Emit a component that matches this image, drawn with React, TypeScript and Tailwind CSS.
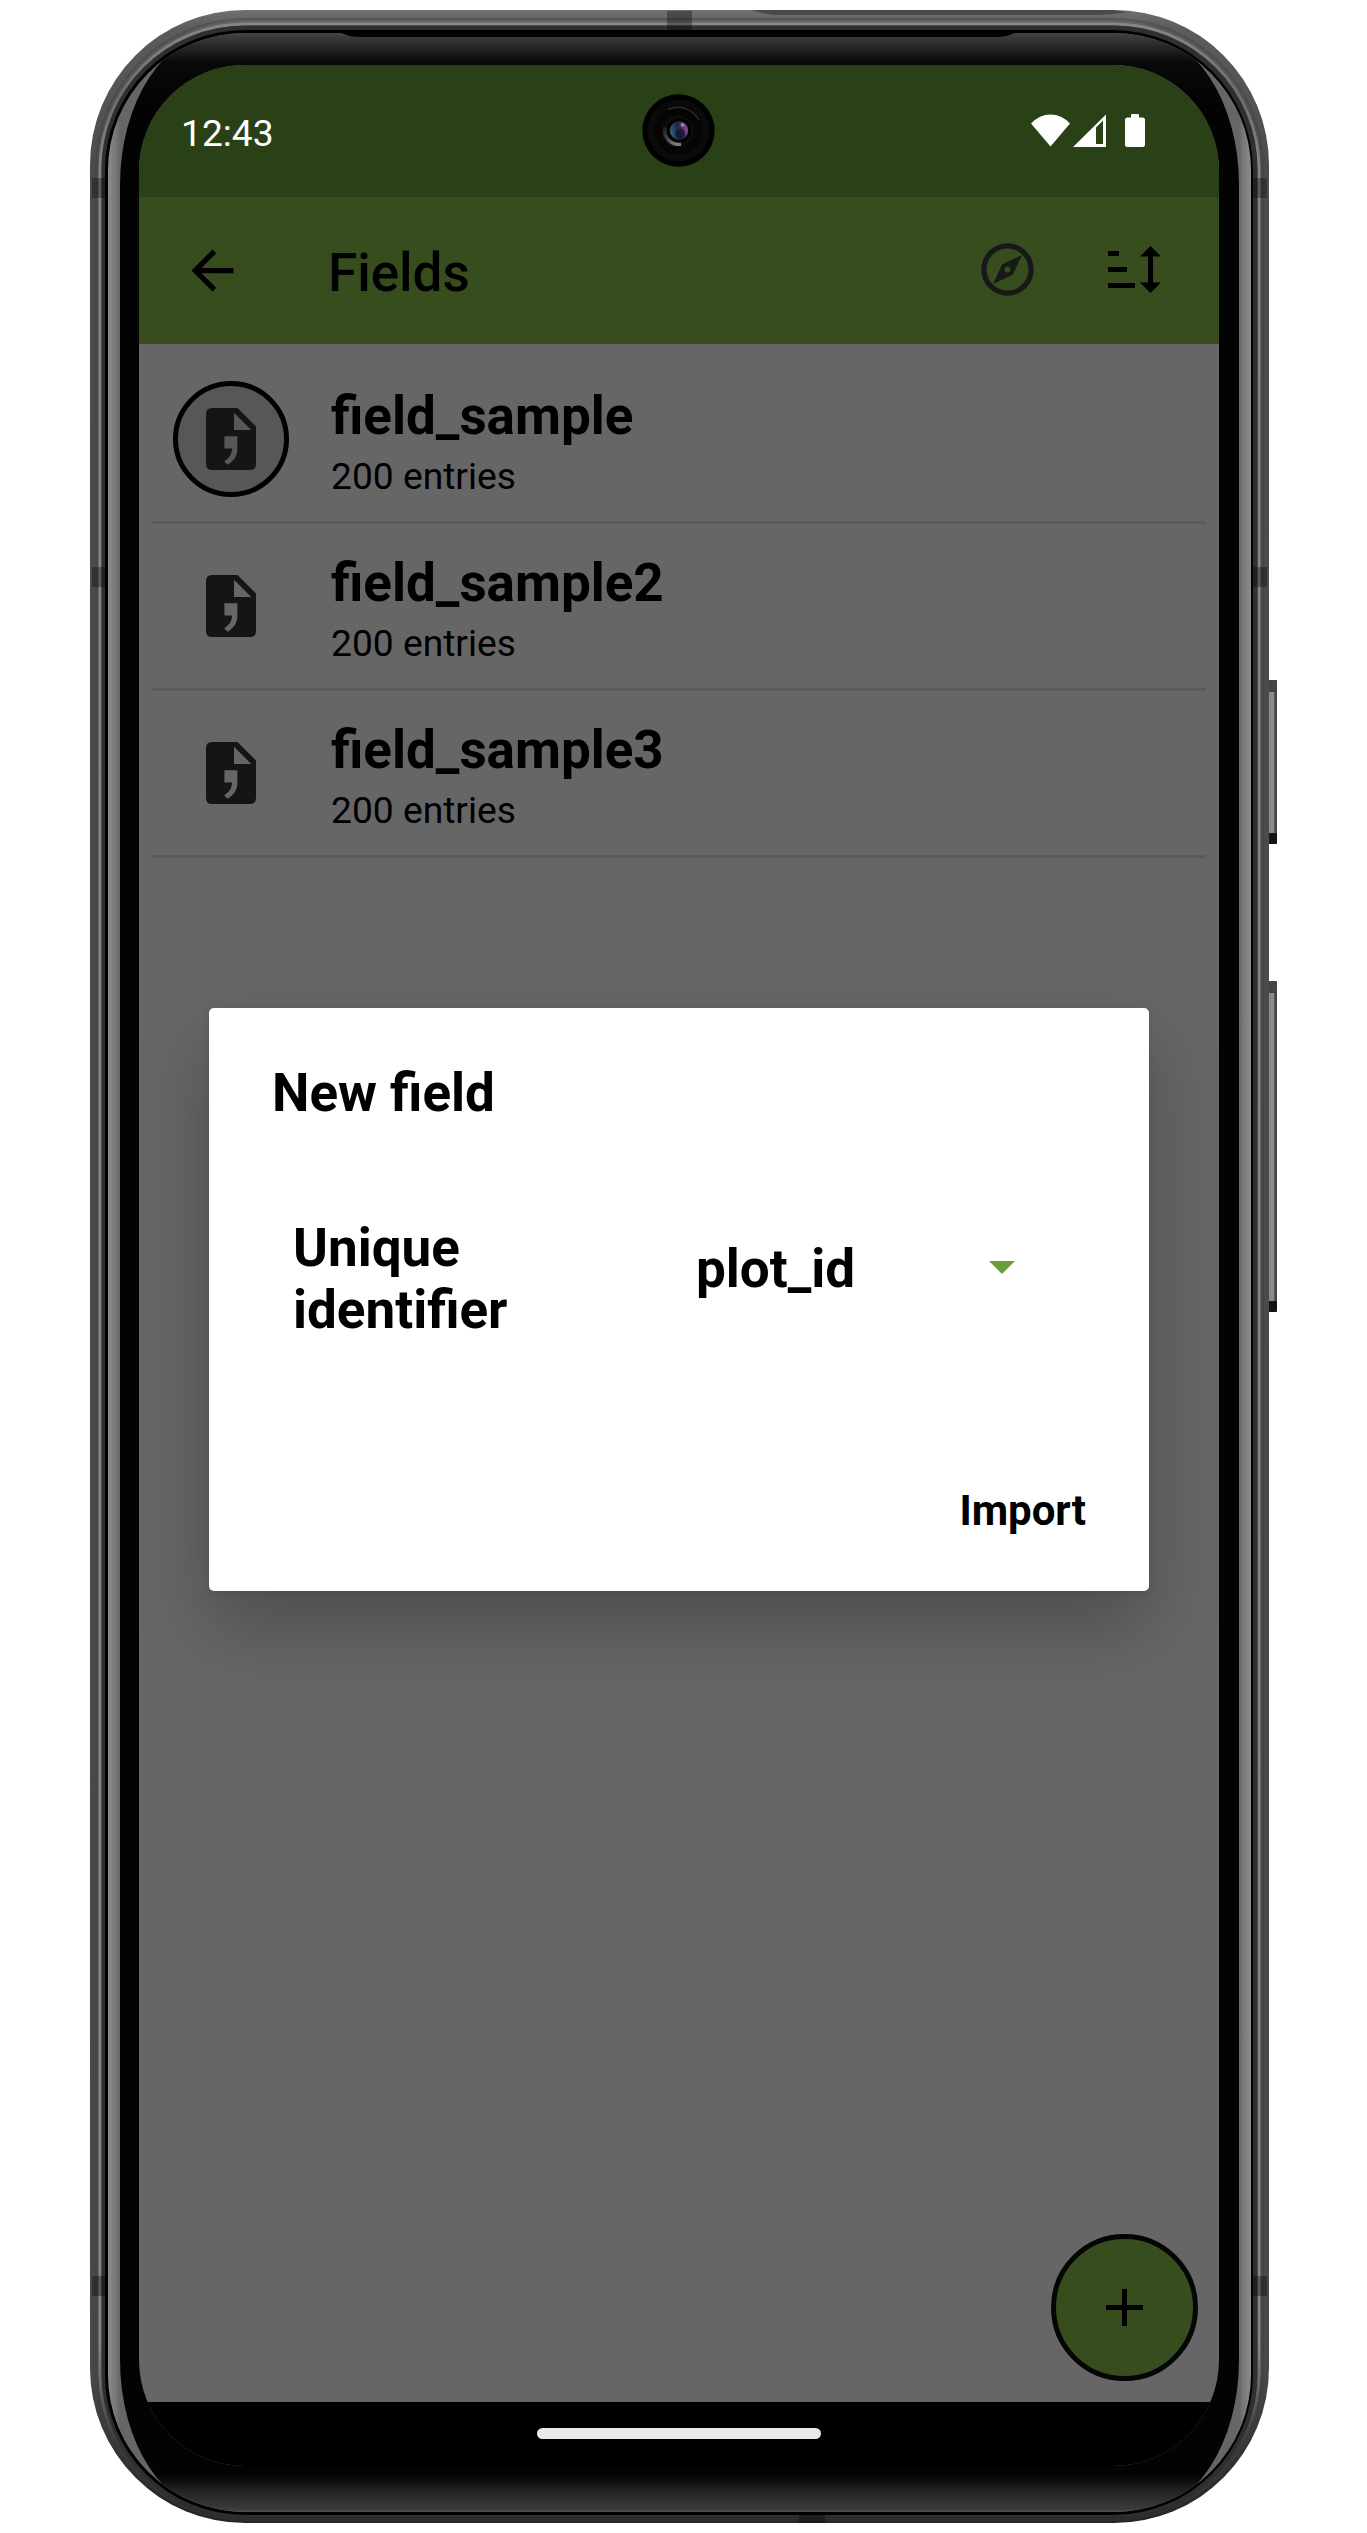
import React from "react";

const rows = [
  { name: "field_sample", count: "200 entries", active: true },
  { name: "field_sample2", count: "200 entries", active: false },
  { name: "field_sample3", count: "200 entries", active: false },
];

function DeviceBody() {
  return (
    <svg className="absolute inset-0" width="1367" height="2533" viewBox="0 0 1367 2533" aria-hidden="true">
      <defs>
        <linearGradient id="shell" gradientUnits="userSpaceOnUse" x1="0" y1="10" x2="0" y2="2523">
          <stop offset="0" stopColor="#707070" />
          <stop offset="0.007" stopColor="#5c5c5c" />
          <stop offset="0.06" stopColor="#4c4c4c" />
          <stop offset="0.94" stopColor="#484848" />
          <stop offset="0.985" stopColor="#2c2c2c" />
          <stop offset="1" stopColor="#242424" />
        </linearGradient>
        <linearGradient id="edge" gradientUnits="userSpaceOnUse" x1="0" y1="20" x2="0" y2="2520">
          <stop offset="0" stopColor="#888888" />
          <stop offset="0.03" stopColor="#6c6c6c" />
          <stop offset="0.06" stopColor="#858585" />
          <stop offset="0.93" stopColor="#858585" />
          <stop offset="0.97" stopColor="#3a3a3a" />
          <stop offset="1" stopColor="#2c2c2c" />
        </linearGradient>
        <linearGradient id="sheenL" gradientUnits="userSpaceOnUse" x1="108" y1="0" x2="120" y2="0">
          <stop offset="0" stopColor="#8c8c8c" />
          <stop offset="0.7" stopColor="#767676" />
          <stop offset="1" stopColor="#666666" />
        </linearGradient>
        <linearGradient id="sheenR" gradientUnits="userSpaceOnUse" x1="1239" y1="0" x2="1251" y2="0">
          <stop offset="0" stopColor="#666666" />
          <stop offset="0.3" stopColor="#767676" />
          <stop offset="1" stopColor="#8c8c8c" />
        </linearGradient>
        <linearGradient id="glass" gradientUnits="userSpaceOnUse" x1="0" y1="33" x2="0" y2="2512">
          <stop offset="0" stopColor="#434343" />
          <stop offset="0.006" stopColor="#242424" />
          <stop offset="0.012" stopColor="#090909" />
          <stop offset="0.03" stopColor="#030303" />
          <stop offset="0.985" stopColor="#030303" />
          <stop offset="0.992" stopColor="#252525" />
          <stop offset="0.999" stopColor="#3c3c3c" />
          <stop offset="1" stopColor="#555555" />
        </linearGradient>
        <linearGradient id="key" x1="0" y1="0" x2="1" y2="0">
          <stop offset="0" stopColor="#4a4a4a" />
          <stop offset="0.25" stopColor="#8a8a8a" />
          <stop offset="0.65" stopColor="#8a8a8a" />
          <stop offset="0.8" stopColor="#444444" />
          <stop offset="1" stopColor="#444444" />
        </linearGradient>
        <clipPath id="bezelClip">
          <rect x="108" y="33" width="1143" height="2479" rx="137" />
        </clipPath>
      </defs>
      {[[680, 164], [981, 331]].map(([y, h]) => (
        <g key={y}>
          <rect x="1267" y={y} width="10" height={h} rx="2" fill="url(#key)" />
          <rect x="1269" y={y} width="8" height="12" rx="1" fill="#444444" />
          <rect x="1268" y={y + h - 11} width="9" height="11" rx="1" fill="#141414" />
        </g>
      ))}
      <rect x="90" y="10" width="1179" height="2513" rx="155" fill="url(#shell)" />
      <rect x="96" y="19" width="1167" height="2501" rx="149" fill="none" stroke="#3e3e3e" strokeWidth="2" opacity="0.4" />
      <path d="M752 10H1112L1128 12Q1110 15 1090 15H775Q762 14 752 10Z" fill="#4a4a4a" />
      <rect x="100" y="24" width="1159" height="2495" rx="145" fill="none" stroke="url(#edge)" strokeWidth="3" />
      <rect x="101.5" y="25.5" width="1156" height="2492" rx="143.500" fill="#2f2f2f" />
      <rect x="105" y="30" width="1148" height="2485" rx="140" fill="#000000" />
      <g clipPath="url(#bezelClip)">
        <rect x="108" y="33" width="500" height="2479" fill="url(#sheenL)" />
        <rect x="700" y="33" width="551" height="2479" fill="url(#sheenR)" />
        <rect x="120" y="33" width="1119" height="2479" rx="100" ry="152" fill="url(#glass)" />
      </g>
      <path d="M336 31H1021L1012 34Q1006 37 998 37H360Q350 37 344 34Z" fill="#000000" />
      <g fill="#000000" opacity="0.32">
        <rect x="667" y="11" width="25" height="20" />
        <rect x="799" y="2514" width="26" height="9" />
        {[178, 567, 2276].map((y) => (
          <g key={y}>
            <rect x="92" y={y} width="14" height="20" />
            <rect x="1253" y={y} width="14" height="20" />
          </g>
        ))}
      </g>
    </svg>
  );
}

function Camera() {
  return (
    <svg className="absolute left-[503px] top-[29px]" width="73" height="73" viewBox="0 0 73 73" aria-hidden="true">
      <defs>
        <radialGradient id="lens" cx="0.5" cy="0.5" r="0.5">
          <stop offset="0" stopColor="#101020" />
          <stop offset="1" stopColor="#16202c" />
        </radialGradient>
        <linearGradient id="tint" x1="0" y1="0.6" x2="1" y2="0.4">
          <stop offset="0" stopColor="#2d6a80" />
          <stop offset="0.45" stopColor="#1c2440" />
          <stop offset="0.7" stopColor="#43305c" />
          <stop offset="1" stopColor="#8a5a9c" />
        </linearGradient>
        <linearGradient id="rim" x1="0" y1="0" x2="0.6" y2="1">
          <stop offset="0" stopColor="#1a1a1a" />
          <stop offset="0.6" stopColor="#4a4a4a" />
          <stop offset="1" stopColor="#7a7a7a" />
        </linearGradient>
      </defs>
      <circle cx="36.500" cy="36.500" r="36.200" fill="#000000" />
      <circle cx="36.500" cy="36.500" r="31" fill="#0a0a0a" />
      <circle cx="37" cy="36.500" r="24" fill="#050505" />
      <path d="M26 15.500A24 24 0 0 1 57 26" fill="none" stroke="#2c2c2c" strokeWidth="1.500" />
      <circle cx="35.500" cy="37.500" r="16" fill="#0c0c0c" />
      <path d="M23 33A14 14 0 0 0 39 50" fill="none" stroke="url(#rim)" strokeWidth="3.500" />
      <circle cx="37" cy="36.500" r="12" fill="#000000" />
      <circle cx="37" cy="36.500" r="9.500" fill="url(#lens)" />
      <circle cx="37" cy="36.500" r="9" fill="url(#tint)" />
      <circle cx="38" cy="40" r="5" fill="#15142a" opacity="0.7" />
      <circle cx="40.500" cy="31" r="2" fill="#b79ac8" opacity="0.7" />
    </svg>
  );
}

function StatusIcons() {
  return (
    <svg width="115" height="34" viewBox="0 0 115 34" fill="#ffffff" aria-hidden="true">
      <path d="M19.500 32.500L0 9.500Q8.500 0.500 19.500 0.500T39 9.500Z" />
      <path fillRule="evenodd" d="M42 33L75 0.500V33ZM65 13.500V30H72V6.500Z" />
      <rect x="94" y="3.500" width="20" height="29.500" rx="2.500" />
      <rect x="100" y="0" width="8" height="6" rx="1" />
    </svg>
  );
}

function FileIcon() {
  return (
    <svg width="50" height="62" viewBox="0 0 50 62" aria-hidden="true">
      <path
        fill="#151515"
        fillRule="evenodd"
        d="M6 0H31.500L50 18.500V56Q50 62 44 62H6Q0 62 0 56V6Q0 0 6 0ZM28 4.700V22H45.300ZM18.400 28.300V40.600H26C26 46.500 23 50.500 18.200 53.200L21.500 56.700C28 53 31.400 47.500 31.400 41V28.300Z"
      />
    </svg>
  );
}

function FieldRow({ name, count, active }: { name: string; count: string; active: boolean }) {
  return (
    <div className="mx-[13px] flex h-[167px] border-b-[3px] border-[#5b5b5b]">
      <div
        className={
          active
            ? "ml-[21px] mt-[24px] flex h-[116px] w-[116px] items-center justify-center rounded-full border-[5px] border-black bg-[#575757]"
            : "ml-[21px] mt-[24px] flex h-[116px] w-[116px] items-center justify-center"
        }
      >
        <FileIcon />
      </div>
      <div className="ml-[42px] flex flex-col gap-[8px] pt-[28px]">
        <div className="text-[53px] leading-[62px] font-bold">{name}</div>
        <div className="text-[37.2px] leading-[43px]">{count}</div>
      </div>
    </div>
  );
}

export default function App() {
  return (
    <div className="relative h-[2533px] w-[1367px] overflow-hidden bg-white pt-[65px] pl-[139px] font-['Roboto',sans-serif] text-black">
      <DeviceBody />
      <div className="relative flex h-[2401px] w-[1080px] flex-col overflow-hidden rounded-[106px] bg-[#666666]">
        <header className="flex h-[132px] shrink-0 items-start justify-between bg-[#2a4017] pr-[73px] pl-[42px] text-white">
          <span className="mt-[47px] text-[37.2px] leading-[43px]">12:43</span>
          <span className="mt-[49px]">
            <StatusIcons />
          </span>
        </header>
        <Camera />

        <nav className="flex h-[147px] shrink-0 items-center bg-[#384d1e] pl-[42px]">
          <svg width="63" height="63" viewBox="0 0 24 24" aria-hidden="true">
            <path d="M20 11H7.830l5.590-5.590L12 4l-8 8 8 8 1.410-1.410L7.830 13H20v-2z" />
          </svg>
          <h1 className="ml-[84px] grow pt-[4px] text-[53px] leading-[62px] font-medium">Fields</h1>
          <svg className="mr-[69px] mb-[2px]" width="63" height="63" viewBox="0 0 24 24" fill="#181818" aria-hidden="true">
            <path fillRule="evenodd" d="M12 2a10 10 0 1 0 0 20 10 10 0 0 0 0-20zm0 2a8 8 0 1 1 0 16 8 8 0 0 1 0-16zM6.500 17.500l7.510-3.490L17.500 6.500 9.990 9.990 6.500 17.500zM12 10.900a1.100 1.100 0 1 1 0 2.200 1.100 1.100 0 0 1 0-2.200z" />
          </svg>
          <svg className="mr-[58px] mb-[2px]" width="53" height="47" viewBox="0 0 53 47" aria-hidden="true">
            <path d="M0 5H11V10H0ZM0 21H19V26H0ZM0 37H27V42H0ZM42.500 0L53 10.500H45V36.500H53L42.500 47L32 36.500H40V10.500H32Z" />
          </svg>
        </nav>

        <main className="grow pt-[13px]">
          {rows.map((row) => (
            <FieldRow key={row.name} {...row} />
          ))}
        </main>

        <footer className="flex h-[64px] shrink-0 justify-center bg-black pt-[26px]">
          <div className="h-[11px] w-[284px] rounded-full bg-[#e9e9e9]" />
        </footer>

        <button
          aria-label="Add field"
          className="absolute right-[21px] bottom-[85px] flex h-[147px] w-[147px] items-center justify-center rounded-full border-[5px] border-[#050505] bg-[#384d1e]"
        >
          <svg width="37" height="37" viewBox="0 0 37 37" aria-hidden="true">
            <path d="M16 0H21V16H37V21H21V37H16V21H0V16H16Z" />
          </svg>
        </button>

        <section
          role="dialog"
          className="absolute top-[943px] left-[70px] flex h-[583px] w-[940px] flex-col rounded-[5px] bg-white shadow-[0_36px_76px_rgba(0,0,0,0.24),0_2px_6px_rgba(0,0,0,0.08)]"
        >
          <h2 className="mt-[54px] ml-[63px] text-[53px] leading-[62px] font-bold">New field</h2>
          <div className="mt-[93px] ml-[84px] flex items-center text-[53px] leading-[62px] font-bold">
            <div className="w-[403px]">
              Unique
              <br />
              identifier
            </div>
            <div className="w-[293px] pb-[20px]">plot_id</div>
            <svg className="mb-[23px]" width="26" height="13" viewBox="0 0 26 13" aria-hidden="true">
              <path d="M0 0H26L13 13Z" fill="#689f38" />
            </svg>
          </div>
          <button className="mt-[145px] mr-[63px] self-end text-[42px] leading-[49px] font-bold">Import</button>
        </section>
      </div>
    </div>
  );
}
